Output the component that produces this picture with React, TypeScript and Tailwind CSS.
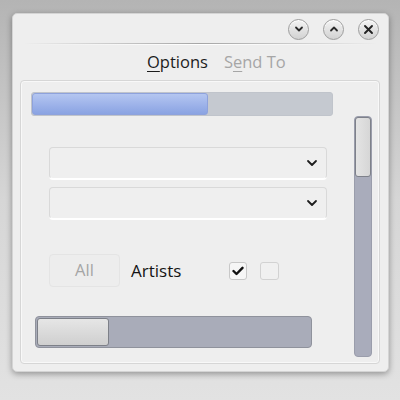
import React from "react";

function Chevron({ dir }: { dir: "up" | "down" }) {
  return (
    <svg width="10" height="10" viewBox="0 0 10 10">
      <path
        d={dir === "down" ? "M2 3.5 L5 6.5 L8 3.5" : "M2 6.5 L5 3.5 L8 6.5"}
        fill="none"
        stroke="#2a2a2a"
        strokeWidth="1.8"
        strokeLinecap="round"
        strokeLinejoin="round"
      />
    </svg>
  );
}

function TitleButton({ kind }: { kind: "down" | "up" | "close" }) {
  return (
    <div className="w-[21px] h-[21px] rounded-full border border-[#9d9d9d] bg-gradient-to-b from-[#f4f4f4] to-[#d2d2d2] flex items-center justify-center shadow-[inset_0_1px_0_#ffffff]">
      {kind === "close" ? (
        <svg width="11" height="11" viewBox="0 0 11 11">
          <path d="M2 2 L9 9 M9 2 L2 9" stroke="#222" strokeWidth="1.9" strokeLinecap="round" />
        </svg>
      ) : (
        <Chevron dir={kind} />
      )}
    </div>
  );
}

function Combo() {
  return (
    <div className="w-[278px] h-[32px] rounded-[4px] border border-[#d9d9d9] border-b-white bg-[#efefef] flex items-center justify-end pr-[8px] shadow-[0_1px_0_#ffffff]">
      <svg width="12" height="10" viewBox="0 0 12 10">
        <path d="M2 3 L6 7 L10 3" fill="none" stroke="#1e1e1e" strokeWidth="1.8" strokeLinecap="round" strokeLinejoin="round" />
      </svg>
    </div>
  );
}

export default function App() {
  return (
    <div
      className="w-[400px] h-[400px] bg-gradient-to-b from-[#b4b4b4] via-[#d6d6d6] to-[#e2e2e2] pt-[13px] pl-[12px]"
      style={{ fontFamily: '"Open Sans", "DejaVu Sans", sans-serif' }}
    >
      <div className="w-[377px] h-[359px] rounded-[5px] bg-[#eeeeee] border border-[#d4d4d4] shadow-[0_2px_6px_rgba(0,0,0,0.35)] flex flex-col">
        {/* title bar */}
        <div className="h-[29px] flex items-center justify-end gap-[14px] pr-[9px] pt-[1px]">
          <TitleButton kind="down" />
          <TitleButton kind="up" />
          <TitleButton kind="close" />
        </div>
        {/* separator */}
        <div className="mx-[10px] h-[1px] bg-gradient-to-r from-transparent via-[#a6a6a6] to-transparent" />
        <div className="mx-[10px] h-[1px] bg-gradient-to-r from-transparent via-white to-transparent" />
        {/* tabs */}
        <div className="h-[35px] flex items-center pl-[134px] gap-[16px] text-[16.5px] leading-none pb-[1px]">
          <span className="text-[#1c1c1c]">
            <span className="underline underline-offset-[3px]">O</span>ptions
          </span>
          <span className="text-[#a6a6a6]">
            S<span className="underline underline-offset-[3px]">e</span>nd To
          </span>
        </div>
        {/* panel */}
        <div className="ml-[7px] w-[360px] h-[284px] rounded-[4px] border border-[#d6d6d6] shadow-[inset_0_0_0_1px_#f8f8f8] flex flex-col">
          {/* progress bar */}
          <div className="ml-[10px] mt-[11px] w-[302px] h-[24px] rounded-[3px] bg-[#c5c9d0] border border-[#c0c4cb] flex overflow-hidden">
            <div className="w-[176px] h-full rounded-[3px] border border-[#8ea2dc] bg-gradient-to-b from-[#b4c6f0] via-[#9fb4ea] to-[#8aa3e2]" />
          </div>
          <div className="flex flex-1">
            {/* content column */}
            <div className="w-[323px] flex flex-col">
              <div className="ml-[28px] mt-[31px] flex flex-col gap-[8px]">
                <Combo />
                <Combo />
              </div>
              <div className="ml-[28px] mt-[35px] h-[33px] flex items-center">
                <div className="w-[71px] h-[33px] rounded-[4px] border border-[#e4e4e4] bg-[#ededed] flex items-center justify-center text-[16.5px] text-[#a5a5a5]">
                  All
                </div>
                <span className="ml-[11px] text-[17px] text-[#141414]">Artists</span>
                <div className="ml-[48px] w-[18px] h-[18px] rounded-[3px] border border-[#c8c8c8] bg-[#f6f6f6] flex items-center justify-center">
                  <svg width="12" height="10" viewBox="0 0 12 10">
                    <path d="M1.5 5 L4.5 8 L10.5 1.8" fill="none" stroke="#111" strokeWidth="2.4" strokeLinecap="round" strokeLinejoin="round" />
                  </svg>
                </div>
                <div className="ml-[13px] w-[19px] h-[18px] rounded-[3px] border border-[#d2d2d2] bg-[#f0f0f0]" />
              </div>
              <div className="ml-[14px] mt-[29px] w-[277px] h-[32px] rounded-[4px] border border-[#8f929c] bg-[#a9acb9] p-[1px]">
                <div className="w-[72px] h-full rounded-[3px] border border-[#7d8088] bg-gradient-to-b from-[#e6e6e6] to-[#cfcfcf]" />
              </div>
            </div>
            {/* scrollbar */}
            <div className="ml-[10px] mb-[6px] w-[18px] rounded-[4px] border border-[#9a9dab] bg-[#a9acbb] flex flex-col">
              <div className="h-[60px] rounded-[3px] border border-[#7e818a] bg-gradient-to-r from-[#e4e4e4] to-[#d6d6d6]" />
            </div>
          </div>
        </div>
      </div>
    </div>
  );
}
